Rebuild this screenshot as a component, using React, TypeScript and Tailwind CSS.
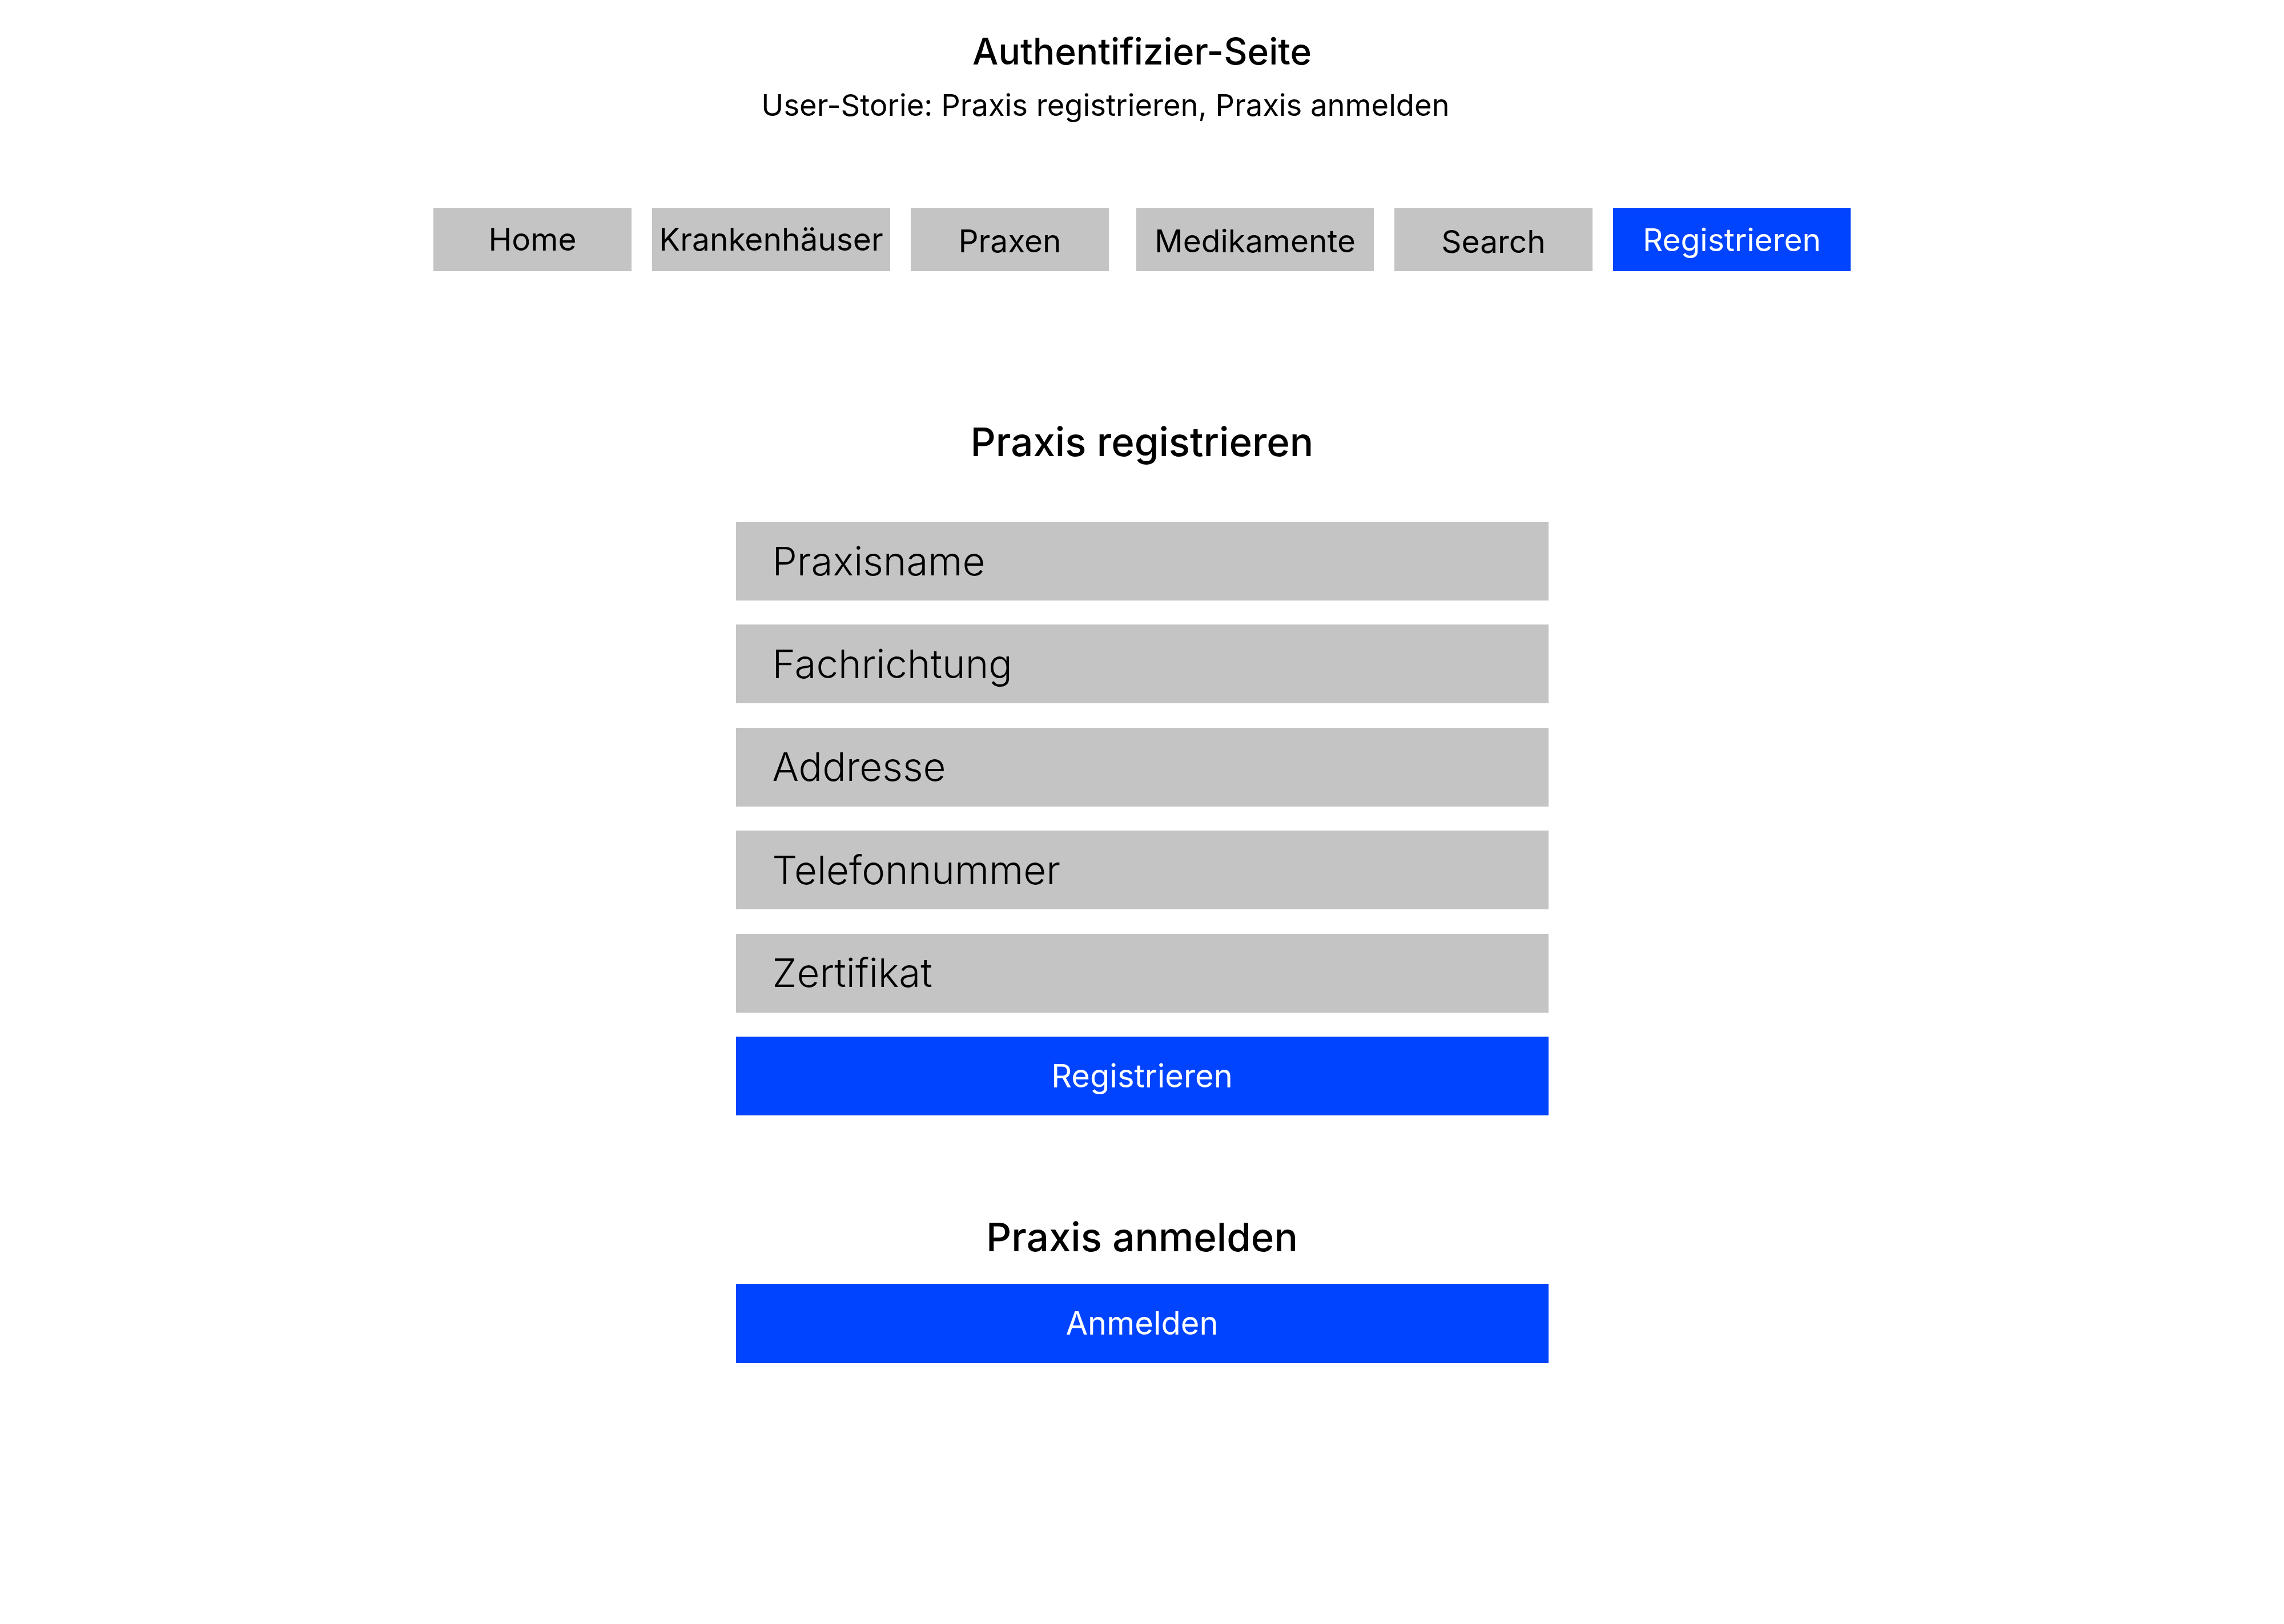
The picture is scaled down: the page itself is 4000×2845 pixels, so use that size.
import React from "react";

const navItems = [
  { label: "Home", w: "w-[347px]", extra: "", active: false, pt: "pt-0" },
  { label: "Krankenhäuser", w: "w-[417px]", extra: "", active: false, pt: "pt-0" },
  { label: "Praxen", w: "w-[347px]", extra: "", active: false, pt: "pt-[6px]" },
  { label: "Medikamente", w: "w-[416px]", extra: "ml-[12px]", active: false, pt: "pt-[6px]" },
  { label: "Search", w: "w-[347px]", extra: "", active: false, pt: "pt-[8px]" },
  { label: "Registrieren", w: "w-[416px]", extra: "", active: true, pt: "pt-[2px]" },
];

const fields = ["Praxisname", "Fachrichtung", "Addresse", "Telefonnummer", "Zertifikat"];

export default function App() {
  return (
    <div
      className="w-full min-h-[2845px] bg-white flex flex-col items-center text-black"
      style={{ fontFamily: "Inter, 'Noto Sans', sans-serif" }}
    >
      <h1 className="pt-[50px] text-[64px] leading-[80px] font-medium">Authentifizier-Seite</h1>
      <p className="mt-[22px] mr-[128px] text-[52.5px] leading-[64px] font-normal">
        User-Storie: Praxis registrieren, Praxis anmelden
      </p>

      <nav className="mt-[148px] flex gap-[36px]">
        {navItems.map((n) => (
          <div
            key={n.label}
            className={`${n.w} ${n.extra} h-[111px] flex items-center justify-center text-[55px] leading-none ${
              n.active ? "bg-[#0044ff] text-white" : "bg-[#c4c4c4] text-black"
            }`}
          >
            <span className={n.pt}>{n.label}</span>
          </div>
        ))}
      </nav>

      <h2 className="mt-[259px] text-[69px] leading-[80px] font-medium">Praxis registrieren</h2>

      <div className="mt-[100px] w-[1423px] flex flex-col gap-[42.4px]">
        {fields.map((f) => (
          <div
            key={f}
            className="h-[138px] bg-[#c4c4c4] flex items-center pl-[64px] text-[69px] leading-none font-light"
          >
            {f}
          </div>
        ))}
        <button className="h-[138px] bg-[#0044ff] text-white text-[56px] leading-none flex items-center justify-center">
          Registrieren
        </button>
      </div>

      <h2 className="mt-[173px] text-[69px] leading-[80px] font-medium">Praxis anmelden</h2>

      <button className="mt-[42px] w-[1423px] h-[139px] bg-[#0044ff] text-white text-[56px] leading-none flex items-center justify-center">
        Anmelden
      </button>
    </div>
  );
}
